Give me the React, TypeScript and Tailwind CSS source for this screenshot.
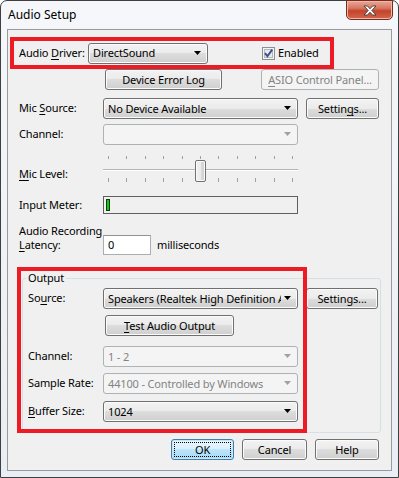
import React from "react";

const btnBase =
  "flex items-center justify-center h-[21px] rounded-[3px] border shrink-0 leading-none";
const btnNormal =
  "border-[#707070] bg-[linear-gradient(#f2f2f2_0%,#ebebeb_50%,#dddddd_50%,#cfcfcf_100%)] shadow-[inset_0_0_0_1px_#fbfbfb] text-black";
const btnDisabled = "border-[#adb2b5] bg-[#f4f4f4] text-[#838383]";

function Btn({
  children,
  className = "",
  disabled,
}: {
  children: React.ReactNode;
  className?: string;
  disabled?: boolean;
}) {
  return (
    <div className={`${btnBase} ${disabled ? btnDisabled : btnNormal} ${className}`}>
      {children}
    </div>
  );
}

function DefaultBtn({ children, className = "" }: { children: React.ReactNode; className?: string }) {
  return (
    <div
      className={`${btnBase} border-[#3c7fb1] bg-[linear-gradient(#eaf6fd_0%,#d9f0fc_50%,#bee6fd_50%,#a7d9f5_100%)] shadow-[inset_0_0_0_1px_#c7e6f8] p-[2px] ${className}`}
    >
      <div className="w-full h-full flex items-center justify-center border border-dotted border-black">
        {children}
      </div>
    </div>
  );
}

function Arrow({ color }: { color: string }) {
  return (
    <svg width="7" height="4" viewBox="0 0 7 4">
      <path d="M0 0H7L3.5 4Z" fill={color} />
    </svg>
  );
}

function Combo({
  value,
  className = "",
  disabled,
}: {
  value: string;
  className?: string;
  disabled?: boolean;
}) {
  return (
    <div
      className={`flex items-center h-[21px] rounded-[3px] border shrink-0 pl-[4px] pr-[6px] overflow-hidden ${
        disabled ? btnDisabled : btnNormal
      } ${className}`}
    >
      <span className="flex-1 min-w-0 whitespace-nowrap overflow-hidden leading-[16px]">{value}</span>
      <span className="ml-[3px] pb-[1px]">
        <Arrow color={disabled ? "#a0a0a0" : "#000"} />
      </span>
    </div>
  );
}

function CheckBox() {
  return (
    <svg width="13" height="13" viewBox="0 0 13 13">
      <rect x="0.5" y="0.5" width="12" height="12" fill="#f4f4f4" stroke="#8e8f8f" />
      <rect x="2.5" y="2.5" width="8" height="8" fill="#e8eaec" stroke="#b2b8bf" />
      <path d="M3 6.2L5.4 9.2L10.2 2.6" fill="none" stroke="#3b4f8a" strokeWidth="1.9" />
    </svg>
  );
}

function CloseBtn() {
  return (
    <div className="ml-auto mr-[5px] -mt-px w-[47px] h-[20px] rounded-b-[5px] border border-[#7a2a1c] bg-[linear-gradient(#e8a897_0%,#d87760_40%,#c4432c_55%,#d2664a_100%)] shadow-[inset_0_0_0_1px_#eeb9a9] flex items-center justify-center">
      <svg width="14" height="11" viewBox="0 0 14 11">
        <path
          d="M1 1H4.5L7 3.8L9.5 1H13L8.8 5.5L13 10H9.5L7 7.2L4.5 10H1L5.2 5.5Z"
          fill="#fff"
          stroke="#3b3b3b"
          strokeWidth="0.9"
          strokeLinejoin="round"
        />
      </svg>
    </div>
  );
}

function Slider() {
  const ticks = Array.from({ length: 11 });
  return (
    <div className="relative w-[195px] h-[40px] shrink-0">
      <div className="mt-[6px] h-[3px] px-[5px] flex justify-between">
        {ticks.map((_, i) => (
          <div key={i} className="w-px h-full bg-[#a0a0a0]" />
        ))}
      </div>
      <div className="mt-[10px] h-[2px] border-t border-[#b5b5b5] border-b border-b-white" />
      <div className="mt-[7px] h-[4px] px-[5px] flex justify-between">
        {ticks.map((_, i) => (
          <div key={i} className="w-px h-full bg-[#a0a0a0]" />
        ))}
      </div>
      <div className="absolute left-[92px] top-[10px] w-[11px] h-[22px] rounded-[2px] border border-[#707070] bg-[linear-gradient(90deg,#f2f2f2_0%,#ebebeb_50%,#dddddd_50%,#cfcfcf_100%)] shadow-[inset_0_0_0_1px_#fbfbfb]" />
    </div>
  );
}

export default function App() {
  return (
    <div className="relative w-[399px] h-[478px] bg-white font-['Noto_Sans',sans-serif] text-[11px] tracking-[-0.15px] text-black whitespace-nowrap">
      <div className="w-[399px] h-[478px] rounded-t-[7px] border border-[#3f3f3f] bg-[linear-gradient(180deg,#f5f7fa_0%,#e9eef4_100%)] flex flex-col">
        {/* title bar */}
        <div className="h-[28px] flex items-start">
          <span className="ml-[7px] mt-[6px] leading-[16px] text-[12px] tracking-normal">Audio Setup</span>
          <CloseBtn />
        </div>

        {/* client area */}
        <div className="ml-[6px] w-[385px] h-[442px] border border-[#9a9a9a] bg-[#f0f0f0] flex flex-col pl-[11px]">
          <div className="mt-[13px] h-[20px] flex items-center">
            <span className="w-[69px] shrink-0">
              Audio <u className="underline-offset-2">D</u>river:
            </span>
            <Combo value="DirectSound" className="w-[120px]" />
            <div className="ml-[54px] flex items-center">
              <CheckBox />
              <span className="ml-[3px]">Enabled</span>
            </div>
          </div>

          <div className="mt-[6px] flex">
            <Btn className="ml-[86px] w-[117px]">Device Error Log</Btn>
            <Btn disabled className="ml-[39px] w-[118px]">
              <span>
                <u className="underline-offset-2">A</u>SIO Control Panel...
              </span>
            </Btn>
          </div>

          <div className="mt-[8px] flex items-center">
            <span className="w-[84px] shrink-0">
              Mic <u className="underline-offset-2">S</u>ource:
            </span>
            <Combo value="No Device Available" className="w-[195px]" />
            <Btn className="ml-[8px] w-[73px]">
              <span>
                Settin<u className="underline-offset-2">g</u>s...
              </span>
            </Btn>
          </div>

          <div className="mt-[5px] flex items-center">
            <span className="w-[84px] shrink-0">Channel:</span>
            <Combo disabled value="" className="w-[195px]" />
          </div>

          <div className="mt-[5px] flex items-start">
            <span className="w-[84px] shrink-0 mt-[16px] leading-[16px]">
              <u className="underline-offset-2">M</u>ic Level:
            </span>
            <Slider />
          </div>

          <div className="mt-[6px] flex items-center">
            <span className="w-[84px] shrink-0">Input Meter:</span>
            <div className="w-[195px] h-[18px] border border-[#5f5f5f] flex items-center pl-[2px]">
              <div className="w-[4px] h-[12px] border border-[#0b3d0b] bg-[#14c814]" />
            </div>
          </div>

          <div className="mt-[10px] flex items-start">
            <span className="w-[84px] shrink-0 leading-[14px]">
              Audio Recording
              <br />
              <u className="underline-offset-2">L</u>atency:
            </span>
            <div className="mt-[11px] flex items-center">
              <div className="w-[48px] h-[20px] border border-[#abadb3] border-t-[#8f9297] bg-white flex items-center pl-[4px]">
                0
              </div>
              <span className="ml-[6px]">milliseconds</span>
            </div>
          </div>

          <fieldset className="mt-[15px] ml-[3px] w-[359px] border border-[#d5dfe5] rounded-[3px] p-0 pb-[10px]">
            <legend className="ml-[3px] px-[2px] leading-[16px]">Output</legend>
            <div className="pl-[5px] flex flex-col">
              <div className="mt-[2px] flex items-center">
                <span className="w-[75px] shrink-0">
                  So<u className="underline-offset-2">u</u>rce:
                </span>
                <Combo value="Speakers (Realtek High Definition Audio)" className="w-[195px]" />
                <Btn className="ml-[8px] w-[72px]">Settings...</Btn>
              </div>
              <div className="mt-[6px] flex">
                <Btn className="ml-[77px] w-[129px]">
                  <span>
                    <u className="underline-offset-2">T</u>est Audio Output
                  </span>
                </Btn>
              </div>
              <div className="mt-[10px] flex items-center">
                <span className="w-[75px] shrink-0">Channel:</span>
                <Combo disabled value="1 - 2" className="w-[195px]" />
              </div>
              <div className="mt-[6px] flex items-center">
                <span className="w-[75px] shrink-0">Sample Rate:</span>
                <Combo disabled value="44100 - Controlled by Windows" className="w-[195px]" />
              </div>
              <div className="mt-[7px] flex items-center">
                <span className="w-[75px] shrink-0">
                  <u className="underline-offset-2">B</u>uffer Size:
                </span>
                <Combo value="1024" className="w-[195px]" />
              </div>
            </div>
          </fieldset>

          <div className="mt-[6px] flex">
            <DefaultBtn className="ml-[152px] w-[63px]">OK</DefaultBtn>
            <Btn className="ml-[8px] w-[65px]">Cancel</Btn>
            <Btn className="ml-[8px] w-[64px]">Help</Btn>
          </div>
        </div>
      </div>

      {/* red annotation frames */}
      <div className="absolute left-[10px] top-[37px] w-[324px] h-[32px] border-[4px] border-[#ed1c24]" />
      <div className="absolute left-[17px] top-[267px] w-[290px] h-[166px] border-[4px] border-[#ed1c24]" />
    </div>
  );
}
